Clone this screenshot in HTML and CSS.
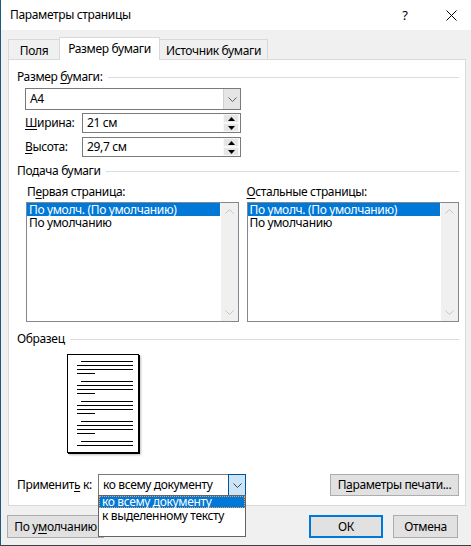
FILE: index.html
```html
<!DOCTYPE html>
<html lang="ru">
<head>
<meta charset="utf-8">
<title>Параметры страницы</title>
<link rel="stylesheet" href="styles.css">
</head>
<body>
<div class="window">
  <div class="titlebar">
    <span class="title">Параметры страницы</span>
    <span class="help">?</span>
    <span class="close"><svg width="11" height="11" viewBox="0 0 11 11"><path d="M0.5 0.5L10.5 10.5M10.5 0.5L0.5 10.5" stroke="#000" stroke-width="1" fill="none"/></svg></span>
  </div>

  <div class="tabs">
    <div class="tab t1">Поля</div>
    <div class="tab t2 active">Размер бумаги</div>
    <div class="tab t3">Источник бумаги</div>
  </div>

  <div class="panel">
    <div class="group"><span>Размер <u>б</u>умаги:</span><i class="rule"></i></div>

    <div class="combo size-combo">
      <span class="value">A4</span>
      <span class="drop"><svg width="9" height="5" viewBox="0 0 9 5"><path d="M0.5 0.5L4.5 4.5L8.5 0.5" stroke="#606060" fill="none"/></svg></span>
    </div>

    <div class="field-row first">
      <span class="label"><u>Ш</u>ирина:</span>
      <div class="spin">
        <span class="value">21 см</span>
        <span class="spin-btns">
          <span class="sb"><svg width="7" height="4" viewBox="0 0 7 4"><path d="M0 4L3.5 0L7 4Z" fill="#000"/></svg></span>
          <span class="sb"><svg width="7" height="4" viewBox="0 0 7 4"><path d="M0 0L3.5 4L7 0Z" fill="#000"/></svg></span>
        </span>
      </div>
    </div>

    <div class="field-row second">
      <span class="label"><u>В</u>ысота:</span>
      <div class="spin">
        <span class="value">29,7 см</span>
        <span class="spin-btns">
          <span class="sb"><svg width="7" height="4" viewBox="0 0 7 4"><path d="M0 4L3.5 0L7 4Z" fill="#000"/></svg></span>
          <span class="sb"><svg width="7" height="4" viewBox="0 0 7 4"><path d="M0 0L3.5 4L7 0Z" fill="#000"/></svg></span>
        </span>
      </div>
    </div>

    <div class="group feed"><span>Подача бумаги</span><i class="rule"></i></div>

    <div class="lists">
      <div class="list-col left">
        <div class="list-label">П<u>е</u>рвая страница:</div>
        <div class="listbox">
          <div class="items">
            <div class="item selected">По умолч. (По умолчанию)</div>
            <div class="item">По умолчанию</div>
          </div>
          <div class="vscroll">
            <svg width="9" height="5" viewBox="0 0 9 5"><path d="M0.5 4.5L4.5 0.5L8.5 4.5" stroke="#c4c4c4" fill="none"/></svg>
            <svg width="9" height="5" viewBox="0 0 9 5"><path d="M0.5 0.5L4.5 4.5L8.5 0.5" stroke="#c4c4c4" fill="none"/></svg>
          </div>
        </div>
      </div>
      <div class="list-col right">
        <div class="list-label"><u>О</u>стальные страницы:</div>
        <div class="listbox">
          <div class="items">
            <div class="item selected">По умолч. (По умолчанию)</div>
            <div class="item">По умолчанию</div>
          </div>
          <div class="vscroll">
            <svg width="9" height="5" viewBox="0 0 9 5"><path d="M0.5 4.5L4.5 0.5L8.5 4.5" stroke="#c4c4c4" fill="none"/></svg>
            <svg width="9" height="5" viewBox="0 0 9 5"><path d="M0.5 0.5L4.5 4.5L8.5 0.5" stroke="#c4c4c4" fill="none"/></svg>
          </div>
        </div>
      </div>
    </div>

    <div class="group sample-title"><span>Образец</span><i class="rule"></i></div>

    <div class="sample">
      <svg width="70" height="97" viewBox="0 0 70 97">
        <g stroke="#000" stroke-width="1">
          <path d="M13 6.5H65M9 10.5H65M9 14.5H65M9 18.5H27"/>
          <path d="M13 26.5H65M9 30.5H65M9 34.5H65M9 38.5H27"/>
          <path d="M13 46.5H65M9 50.5H65M9 54.5H65M9 58.5H27"/>
          <path d="M13 66.5H65M9 70.5H65M9 74.5H65M9 78.5H27"/>
          <path d="M13 86.5H65M9 90.5H65"/>
        </g>
      </svg>
    </div>

    <div class="apply-row">
      <span class="apply-label">Применит<u>ь</u> к:</span>
      <div class="combo apply-combo">
        <span class="value">ко всему документу</span>
        <span class="drop active"><svg width="9" height="5" viewBox="0 0 9 5"><path d="M0.5 0.5L4.5 4.5L8.5 0.5" stroke="#404040" fill="none"/></svg></span>
        <div class="dropdown">
          <div class="dd-item selected">ко всему документу</div>
          <div class="dd-item">к выделенному тексту</div>
        </div>
      </div>
      <button class="btn print-btn">П<u>а</u>раметры печати...</button>
    </div>
  </div>

  <div class="footer">
    <button class="btn default-btn">По у<u>м</u>олчанию</button>
    <button class="btn ok-btn">ОК</button>
    <button class="btn cancel-btn">Отмена</button>
  </div>
</div>
</body>
</html>
```

FILE: styles.css
```css
* { box-sizing: border-box; }

html, body {
  margin: 0;
  padding: 0;
}

body {
  width: 471px;
  height: 546px;
  overflow: hidden;
  font-family: "Noto Sans", "Segoe UI", sans-serif;
  font-size: 12px;
  letter-spacing: -0.35px;
  color: #000;
  background: #f0f0f0;
}

u { text-decoration: underline; text-underline-offset: 2px; text-decoration-thickness: 1px; }

.window {
  width: 471px;
  height: 546px;
  background: #f0f0f0;
  border-left: 1px solid #1c5a80;
  border-bottom: 1px solid #3f3f3f;
  display: flex;
  flex-direction: column;
}

/* Title bar */
.titlebar {
  height: 30px;
  flex: none;
  background: #fff;
  display: flex;
  align-items: center;
  padding-left: 9px;
}
.title { font-size: 12px; line-height: 16px; }
.help {
  margin-left: auto;
  width: 12px;
  text-align: center;
  font-size: 13px;
  line-height: 16px;
  margin-right: 35px;
}
.close {
  width: 11px;
  height: 11px;
  display: flex;
  margin-right: 14px;
}

/* Tabs */
.tabs {
  height: 29px;
  flex: none;
  display: flex;
  align-items: flex-end;
  padding-left: 7px;
}
.tab {
  height: 20px;
  border: 1px solid #d9d9d9;
  border-bottom: none;
  background: #f0f0f0;
  text-align: center;
  line-height: 20px;
  padding-top: 1px;
  margin-left: -1px;
}
.tab.t1 { width: 52px; margin-left: 0; }
.tab.t2 { width: 101px; }
.tab.t3 { width: 109px; }
.tab.active {
  height: 23px;
  background: #fff;
  margin-bottom: -1px;
  position: relative;
  z-index: 1;
  padding-top: 0;
  line-height: 22px;
}

/* Panel */
.panel {
  margin-left: 7px;
  width: 458px;
  height: 447px;
  flex: none;
  background: #fff;
  border: 1px solid #d9d9d9;
  padding: 9px 6px 0 8px;
  display: flex;
  flex-direction: column;
}

.group {
  height: 16px;
  line-height: 16px;
  display: flex;
  align-items: center;
  gap: 5px;
}
.group .rule {
  flex: 1;
  height: 1px;
  background: #dcdcdc;
  margin-top: 1px;
}
.group.feed { margin-top: 6px; }
.group.sample-title { margin-top: 9px; }

/* Combo boxes */
.combo {
  position: relative;
  height: 22px;
  border: 1px solid #7a7a7a;
  background: #fff;
  display: flex;
  align-items: center;
}
.combo .value {
  flex: 1;
  padding-left: 4px;
  line-height: 16px;
}
.combo .drop {
  width: 17px;
  height: 20px;
  background: #e5e5e5;
  border-left: 1px solid #cfcfcf;
  display: flex;
  align-items: center;
  justify-content: center;
}
.size-combo {
  margin-top: 3px;
  margin-left: 8px;
  width: 216px;
}

/* Spin fields */
.field-row {
  display: flex;
  align-items: center;
  margin-left: 8px;
  height: 20px;
}
.field-row.first { margin-top: 3px; }
.field-row.second { margin-top: 4px; }
.field-row .label { width: 57px; line-height: 16px; }
.spin {
  width: 159px;
  height: 20px;
  border: 1px solid #7a7a7a;
  background: #fff;
  display: flex;
  align-items: center;
}
.spin .value { flex: 1; padding-left: 4px; line-height: 16px; }
.spin-btns {
  width: 16px;
  height: 18px;
  margin-right: 1px;
  display: flex;
  flex-direction: column;
}
.sb {
  flex: 1;
  background: #e6e6e6;
  border: 1px solid #f8f8f8;
  display: flex;
  align-items: center;
  justify-content: center;
}

/* List boxes */
.lists {
  margin-top: 5px;
  display: flex;
  gap: 8px;
  margin-left: 9px;
}
.list-col { width: 213px; }
.list-col.left .list-label { padding-left: 1px; }
.list-label { height: 16px; line-height: 16px; }
.listbox {
  margin-top: 2px;
  height: 120px;
  border: 1px solid #828790;
  background: #fff;
  display: flex;
}
.items { flex: 1; }
.item {
  height: 13px;
  line-height: 13px;
  padding-left: 2px;
  white-space: nowrap;
  margin-right: 1px;
}
.item.selected { background: #0078d7; color: #fff; }
.vscroll {
  width: 17px;
  background: #f0f0f0;
  display: flex;
  flex-direction: column;
  justify-content: space-between;
  align-items: center;
  padding: 6px 0 6px;
}

/* Sample */
.sample {
  margin-top: 7px;
  margin-left: 50px;
  width: 72px;
  height: 99px;
  border: 1px solid #000;
  background: #fff;
  box-shadow: 1px 1px 0 #000, 2px 2px 2px rgba(0,0,0,0.25);
}
.sample svg { display: block; }

/* Apply row */
.apply-row {
  margin-top: 21px;
  height: 22px;
  display: flex;
  align-items: center;
}
.apply-label { width: 81px; line-height: 16px; }
.apply-combo { width: 148px; }
.apply-combo .drop.active {
  background: #cce4f7;
  border: 1px solid #005499;
  height: 22px;
  width: 18px;
  margin-right: -1px;
}
.dropdown {
  position: absolute;
  left: -1px;
  top: 100%;
  width: 148px;
  height: 42px;
  background: #fff;
  border: 1px solid #646464;
  z-index: 5;
}
.dd-item {
  height: 12px;
  line-height: 12px;
  padding-left: 3px;
  white-space: nowrap;
}
.dd-item.selected {
  background: #0078d7;
  color: #fff;
  border: 1px dotted #f0a050;
  line-height: 10px;
  padding-left: 2px;
}
.dd-item + .dd-item { margin-top: 2px; }

/* Buttons */
.btn {
  font-family: inherit;
  font-size: 12px;
  letter-spacing: inherit;
  color: #000;
  background: #e1e1e1;
  border: 1px solid #adadad;
  padding: 0;
  margin: 0;
  height: 22px;
  line-height: 16px;
  text-align: center;
}
.print-btn { margin-left: auto; width: 129px; }

.footer {
  margin-top: 9px;
  display: flex;
  padding-left: 6px;
  padding-right: 13px;
}
.footer .btn { height: 23px; }
.default-btn { width: 97px; }
.ok-btn { margin-left: auto; width: 74px; border: 2px solid #0078d7; }
.cancel-btn { margin-left: 10px; width: 65px; }
```
